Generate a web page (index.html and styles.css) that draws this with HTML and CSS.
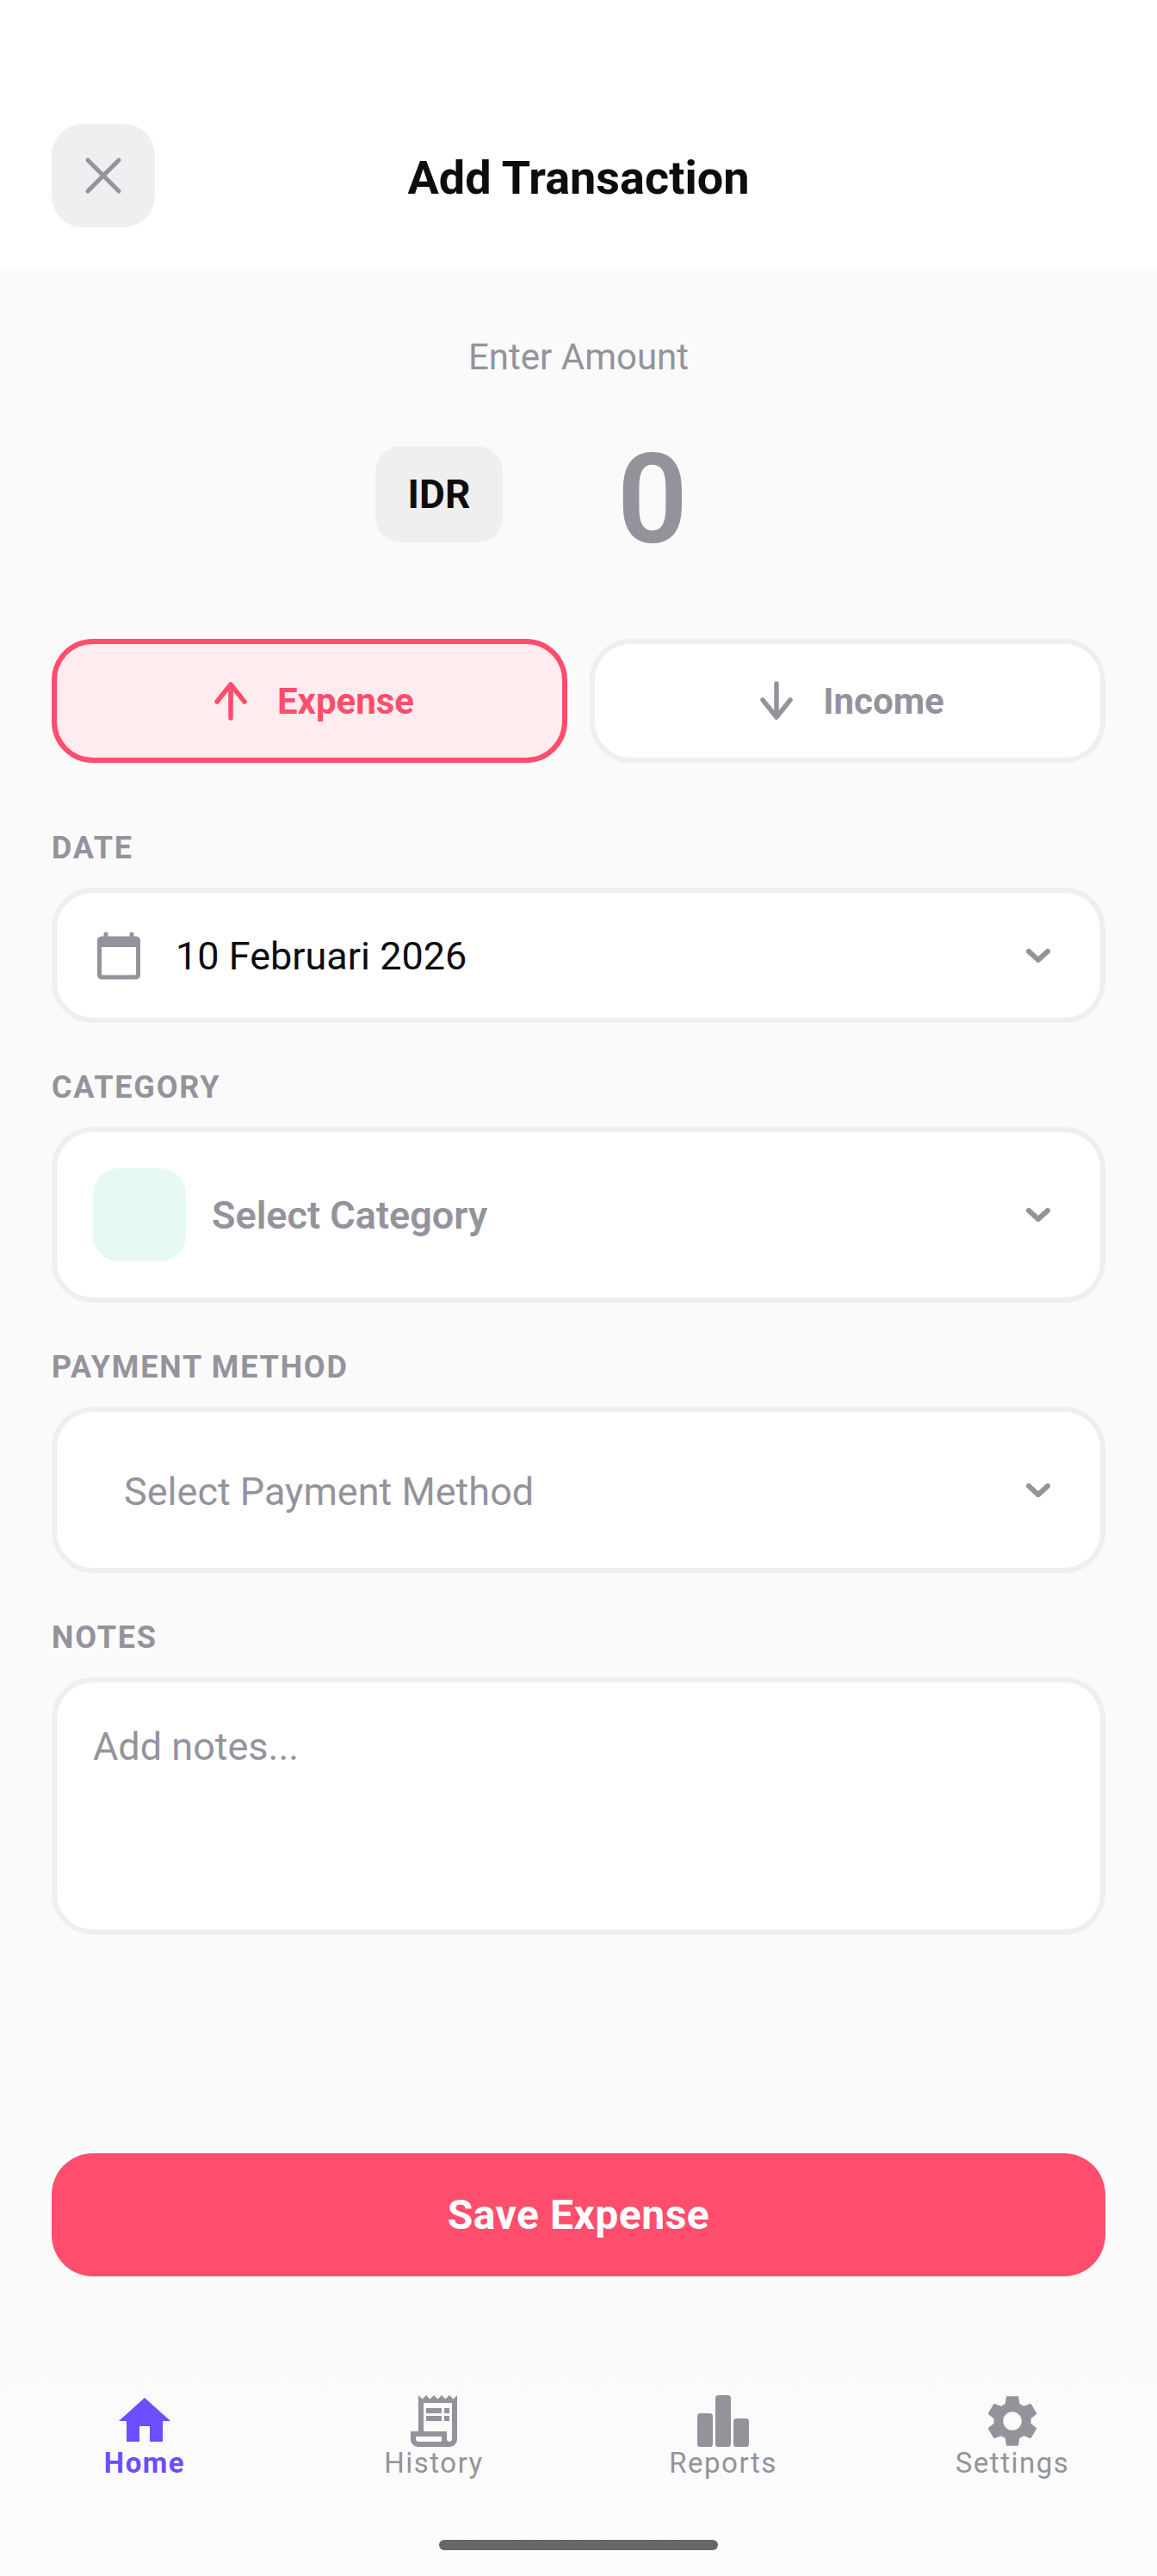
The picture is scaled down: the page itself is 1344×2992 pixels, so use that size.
FILE: index.html
```html
<!DOCTYPE html>
<html lang="en">
<head>
  <meta charset="UTF-8" />
  <title>Add Transaction</title>
  <meta name="viewport" content="width=device-width, initial-scale=1.0" />
  <link rel="stylesheet" href="styles.css">
</head>
<body>

  <header class="top-bar">
    <button class="close-btn">
      <svg class="close-icon" viewBox="0 0 48 48"><path d="M6 6 42 42M42 6 6 42" /></svg>
    </button>
    <h1 class="top-title">Add Transaction</h1>
  </header>

  <main class="form">
    <div class="amount-label">Enter Amount</div>
    <div class="amount-row">
      <div class="currency">IDR</div>
      <div class="amount">0</div>
    </div>

    <div class="type-row">
      <button class="type-btn type-active">
        <svg class="arrow" viewBox="0 0 60 60"><path d="M30 50V13M14 31 30 11 46 31" /></svg>
        <span>Expense</span>
      </button>
      <button class="type-btn">
        <svg class="arrow" viewBox="0 0 60 60"><path d="M30 10V47M14 29 30 49 46 29" /></svg>
        <span>Income</span>
      </button>
    </div>

    <label class="field-label label-date">DATE</label>
    <div class="field field-date">
      <svg class="calendar" viewBox="0 0 24 24">
        <path d="M20 3h-1V2a1 1 0 0 0-2 0v1H7V2a1 1 0 0 0-2 0v1H4c-1.1 0-2 .9-2 2v16c0 1.1.9 2 2 2h16c1.100 0 2-.9 2-2V5c0-1.100-.9-2-2-2zm0 17.500a.5.5 0 0 1-.5.5h-15a.5.5 0 0 1-.5-.5V8h16v12.500z" />
      </svg>
      <span class="date-text">10 Februari 2026</span>
      <svg class="chevron" viewBox="0 0 36 36"><path d="M7 13 18 23 29 13" /></svg>
    </div>

    <label class="field-label">CATEGORY</label>
    <div class="field field-category">
      <div class="category-chip"></div>
      <span class="category-text">Select Category</span>
      <svg class="chevron" viewBox="0 0 36 36"><path d="M7 13 18 23 29 13" /></svg>
    </div>

    <label class="field-label">PAYMENT METHOD</label>
    <div class="field field-payment">
      <span class="payment-text">Select Payment Method</span>
      <svg class="chevron" viewBox="0 0 36 36"><path d="M7 13 18 23 29 13" /></svg>
    </div>

    <label class="field-label">NOTES</label>
    <div class="notes">Add notes...</div>

    <button class="save-btn">Save Expense</button>
  </main>

  <nav class="bottom-nav">
    <a class="nav-item nav-active">
      <svg class="nav-icon" viewBox="0 0 24 24"><path d="M10 20v-6h4v6h5v-8h3L12 3 2 12h3v8z" /></svg>
      <span>Home</span>
    </a>
    <a class="nav-item">
      <svg class="nav-icon" viewBox="0 0 24 24">
        <path d="M19.500 3.500 18 2l-1.500 1.500L15 2l-1.500 1.500L12 2l-1.500 1.500L9 2 7.500 3.500 6 2v14H3v3c0 1.660 1.340 3 3 3h12c1.660 0 3-1.340 3-3V2l-1.500 1.500zM15 20H6c-.55 0-1-.45-1-1v-1h10v2zm4-1c0 .55-.45 1-1 1s-1-.45-1-1v-3H8V5h11v14z" />
        <path d="M9 7h6v2H9zM16 7h2v2h-2zM9 10h6v2H9zM16 10h2v2h-2z" />
      </svg>
      <span>History</span>
    </a>
    <a class="nav-item">
      <svg class="nav-icon" viewBox="0 0 24 24">
        <rect x="2" y="9" width="6" height="13" rx="1.200" />
        <rect x="9" y="2" width="6" height="20" rx="1.200" />
        <rect x="16" y="11" width="6" height="11" rx="1.200" />
      </svg>
      <span>Reports</span>
    </a>
    <a class="nav-item">
      <svg class="nav-icon" viewBox="0 0 24 24">
        <path d="M19.140 12.940c.04-.3.06-.61.06-.94 0-.32-.02-.64-.07-.94l2.030-1.580c.18-.14.23-.41.12-.61l-1.920-3.320c-.12-.22-.37-.29-.59-.22l-2.390.96c-.5-.38-1.030-.7-1.620-.94l-.36-2.540c-.04-.24-.24-.41-.48-.41h-3.840c-.24 0-.43.17-.47.41l-.36 2.540c-.59.24-1.130.57-1.620.94l-2.390-.96c-.22-.08-.47 0-.59.22L2.740 8.870c-.12.21-.08.47.12.61l2.030 1.580c-.05.3-.09.63-.09.94s.02.64.07.94l-2.030 1.580c-.18.14-.23.41-.12.61l1.920 3.320c.12.22.37.29.59.22l2.390-.96c.5.38 1.030.7 1.620.94l.36 2.540c.05.24.24.41.48.41h3.840c.24 0 .44-.17.47-.41l.36-2.540c.59-.24 1.130-.56 1.620-.94l2.390.96c.22.08.47 0 .59-.22l1.920-3.320c.12-.22.07-.47-.12-.61l-2.010-1.580zM12 15.600c-1.980 0-3.600-1.620-3.600-3.600s1.620-3.600 3.600-3.600 3.600 1.620 3.600 3.600-1.620 3.600-3.600 3.600z" />
      </svg>
      <span>Settings</span>
    </a>
    <div class="home-bar"></div>
  </nav>

</body>
</html>
```
FILE: styles.css
```css
* { box-sizing: border-box; }

html, body {
  margin: 0;
  padding: 0;
}

body {
  width: 1344px;
  height: 2992px;
  font-family: Roboto, sans-serif;
  background-color: #fafafa;
  color: #0d0d0f;
  display: flex;
  flex-direction: column;
}

button {
  font-family: inherit;
  border: none;
  padding: 0;
}

/* top bar */
.top-bar {
  height: 312px;
  background-color: white;
  padding: 144px 60px 0;
  display: flex;
  align-items: flex-start;
}

.close-btn {
  width: 120px;
  height: 120px;
  border-radius: 36px;
  background-color: #efeff1;
  display: flex;
  align-items: center;
  justify-content: center;
}

.close-icon {
  width: 48px;
  height: 48px;
  fill: none;
  stroke: #94939c;
  stroke-width: 5;
  stroke-linecap: round;
}

.top-title {
  flex: 1;
  margin: 0 120px 0 0;
  height: 120px;
  line-height: 126px;
  text-align: center;
  font-size: 54px;
  font-weight: 700;
}

/* amount */
.form {
  flex: 1;
  padding: 0 60px;
  display: flex;
  flex-direction: column;
}

.amount-label {
  margin-top: 78px;
  height: 50px;
  line-height: 50px;
  text-align: center;
  font-size: 42px;
  color: #94939c;
}

.amount-row {
  margin-top: 78px;
  height: 112px;
  display: flex;
  justify-content: center;
  align-items: center;
  gap: 24px;
}

.currency {
  width: 148px;
  height: 112px;
  line-height: 112px;
  border-radius: 30px;
  background-color: #efeff1;
  text-align: center;
  font-size: 46px;
  font-weight: 700;
}

.amount {
  width: 300px;
  height: 112px;
  text-align: center;
  font-size: 144px;
  font-weight: 600;
  line-height: 126px;
  color: #94939c;
}

/* expense / income */
.type-row {
  margin-top: 112px;
  display: flex;
  gap: 26px;
}

.type-btn {
  flex: 1;
  height: 144px;
  border: 6px solid #efeff1;
  border-radius: 48px;
  background-color: white;
  color: #94939c;
  font-size: 42px;
  font-weight: 700;
  display: flex;
  align-items: center;
  justify-content: center;
  gap: 24px;
}

.type-active {
  border-color: #ff4d6d;
  background-color: #ffecef;
  color: #ff4d6d;
}

.arrow {
  width: 60px;
  height: 60px;
  fill: none;
  stroke: currentColor;
  stroke-width: 5.500;
  stroke-linecap: round;
  stroke-linejoin: round;
}

/* form fields */
.field-label {
  display: block;
  height: 30px;
  line-height: 30px;
  font-size: 36px;
  font-weight: 700;
  letter-spacing: 1.800px;
  color: #94939c;
  margin-top: 60px;
  margin-bottom: 31px;
}

.label-date { margin-top: 84px; }

.field {
  background-color: white;
  border: 6px solid #efeff1;
  border-radius: 48px;
  display: flex;
  align-items: center;
  padding-left: 42px;
  padding-right: 54px;
}

.field-date { height: 157px; }
.field-category { height: 204px; }
.field-payment { height: 193px; padding-left: 78px; }

.calendar {
  width: 60px;
  height: 60px;
  fill: #94939c;
}

.date-text {
  margin-left: 36px;
  padding-top: 2px;
  flex: 1;
  font-size: 45px;
}

.category-chip {
  width: 108px;
  height: 108px;
  border-radius: 30px;
  background-color: #e6f9f4;
}

.category-text {
  margin-left: 30px;
  flex: 1;
  font-size: 45px;
  font-weight: 600;
  color: #94939c;
}

.payment-text {
  flex: 1;
  padding-top: 3px;
  font-size: 45px;
  color: #94939c;
}

.chevron {
  width: 36px;
  height: 36px;
  fill: none;
  stroke: #94939c;
  stroke-width: 6;
  stroke-linecap: round;
  stroke-linejoin: round;
}

.notes {
  height: 299px;
  background-color: white;
  border: 6px solid #efeff1;
  border-radius: 48px;
  padding: 50px 42px;
  font-size: 45px;
  line-height: 50px;
  color: #94939c;
}

.save-btn {
  margin-top: 254px;
  height: 143px;
  border-radius: 48px;
  background-color: #ff4d6d;
  color: white;
  font-size: 48px;
  font-weight: 700;
  letter-spacing: 0.500px;
}

/* bottom navigation */
.bottom-nav {
  height: 232px;
  background: linear-gradient(#fafafa, #fcfcfc);
  display: flex;
  position: relative;
}

.nav-item {
  flex: 1;
  height: 120px;
  margin-top: 16px;
  display: flex;
  flex-direction: column;
  align-items: center;
  color: #94939c;
  font-size: 33px;
  letter-spacing: 1.500px;
  line-height: 36px;
}

.nav-item span { margin-top: -5px; }

.nav-active {
  color: #6c4dff;
  font-weight: 700;
}

.nav-icon {
  width: 72px;
  height: 72px;
  fill: currentColor;
}

.home-bar {
  position: absolute;
  left: 510px;
  bottom: 30px;
  width: 324px;
  height: 12px;
  border-radius: 6px;
  background-color: #666;
}
```
